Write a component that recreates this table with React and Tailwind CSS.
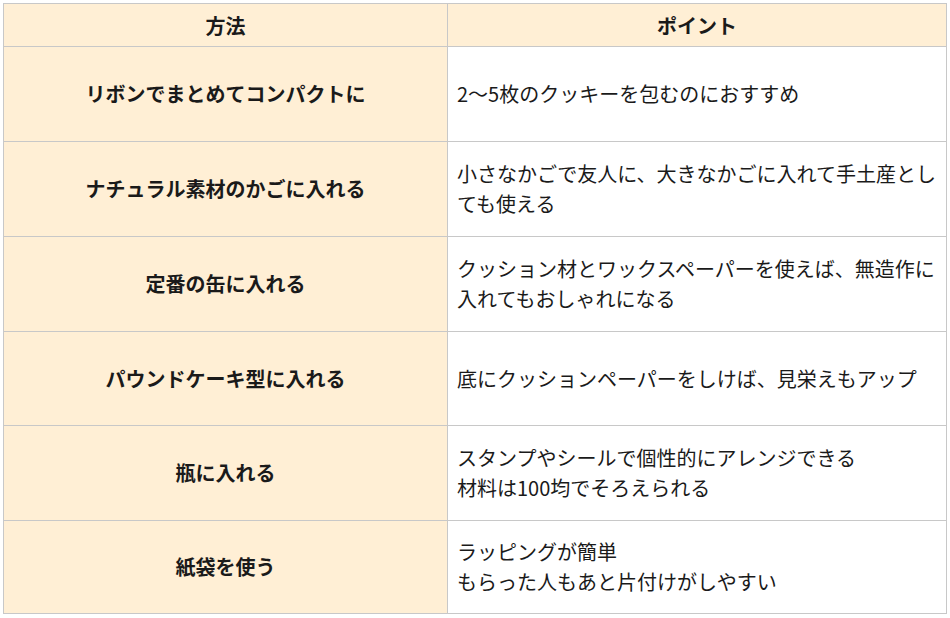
import React from "react";

const rows = [
  ["リボンでまとめてコンパクトに", ["2〜5枚のクッキーを包むのにおすすめ"], "h-[95px]"],
  ["ナチュラル素材のかごに入れる", ["小さなかごで友人に、大きなかごに入れて手土産とし", "ても使える"], "h-[95px]"],
  ["定番の缶に入れる", ["クッション材とワックスペーパーを使えば、無造作に", "入れてもおしゃれになる"], "h-[95px]"],
  ["パウンドケーキ型に入れる", ["底にクッションペーパーをしけば、見栄えもアップ"], "h-[94px]"],
  ["瓶に入れる", ["スタンプやシールで個性的にアレンジできる", "材料は100均でそろえられる"], "h-[95px]"],
  ["紙袋を使う", ["ラッピングが簡単", "もらった人もあと片付けがしやすい"], "h-[93px]"],
];

export default function App() {
  return (
    <div
      className="bg-white w-[950px] h-[618px] pt-[3px] pl-[3px]"
      style={{ fontFamily: '"Noto Sans CJK JP", "Noto Sans", sans-serif' }}
    >
      <table className="border-collapse w-[943px] text-[20px] text-[#1a1a1a] table-fixed">
        <colgroup>
          <col className="w-[444px]" />
          <col className="w-[499px]" />
        </colgroup>
        <thead>
          <tr className="h-[43px] bg-[#ffefd5]">
            <th className="border border-[#c8c8c8] font-bold text-center align-middle leading-[30px] pt-[2px]">方法</th>
            <th className="border border-[#c8c8c8] font-bold text-center align-middle leading-[30px] pt-[2px]">ポイント</th>
          </tr>
        </thead>
        <tbody>
          {rows.map(([a, b, h], i) => (
            <tr key={i} className={h}>
              <td className="border border-[#c8c8c8] bg-[#ffefd5] font-bold text-center align-middle leading-[30px] whitespace-nowrap">
                {a}
              </td>
              <td className="border border-[#c8c8c8] bg-white pl-[9px] align-middle leading-[30px] whitespace-nowrap">
                {b.map((l, j) => (
                  <div key={j}>{l}</div>
                ))}
              </td>
            </tr>
          ))}
        </tbody>
      </table>
    </div>
  );
}
